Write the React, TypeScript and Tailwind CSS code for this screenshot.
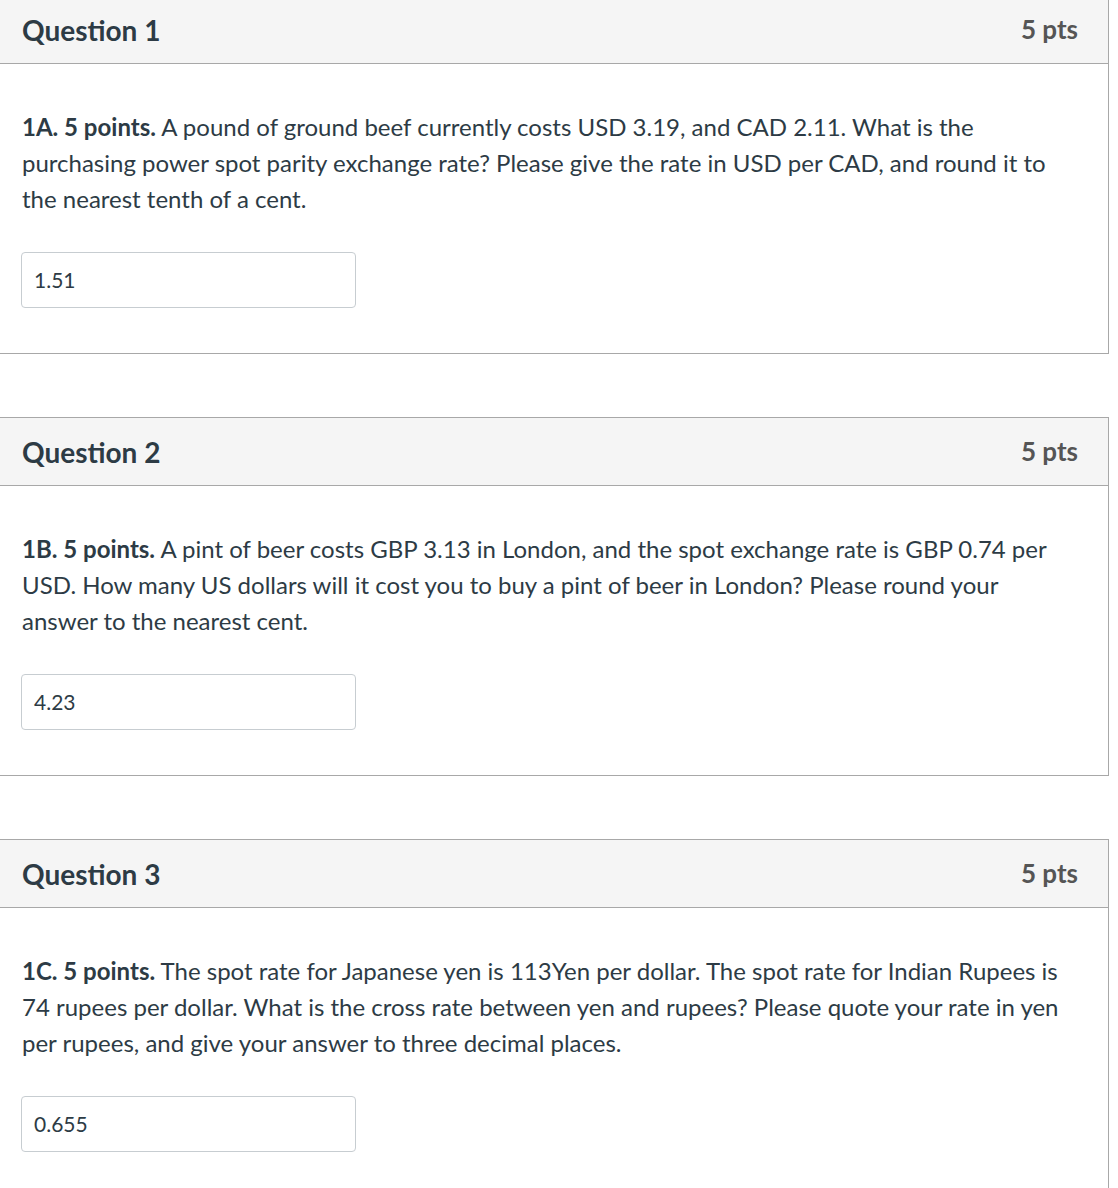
import React from "react";

const questions = [
  {
    title: "Question 1",
    label: "1A. 5 points.",
    text: " A pound of ground beef currently costs USD 3.19, and CAD 2.11. What is the purchasing power spot parity exchange rate? Please give the rate in USD per CAD, and round it to the nearest tenth of a cent.",
    answer: "1.51",
  },
  {
    title: "Question 2",
    label: "1B. 5 points.",
    text: " A pint of beer costs GBP 3.13 in London, and the spot exchange rate is GBP 0.74 per USD. How many US dollars will it cost you to buy a pint of beer in London? Please round your answer to the nearest cent.",
    answer: "4.23",
  },
  {
    title: "Question 3",
    label: "1C. 5 points.",
    text: " The spot rate for Japanese yen is 113Yen per dollar. The spot rate for Indian Rupees is 74 rupees per dollar. What is the cross rate between yen and rupees? Please quote your rate in yen per rupees, and give your answer to three decimal places.",
    answer: "0.655",
  },
];

export default function App() {
  return (
    <div
      className="w-[1118px] h-[1188px] overflow-hidden bg-white"
      style={{ fontFamily: "Lato, 'Open Sans', sans-serif" }}
    >
      <div className="-mt-[5px] -ml-px flex flex-col gap-[63px]">
        {questions.map((q) => (
          <div key={q.title} className="w-[1110px] border border-[#a8a8a8] bg-white">
            <div className="h-[68px] bg-[#f5f5f5] border-b border-[#a8a8a8] flex items-center justify-between pl-[22px] pr-[30px]">
              <div className="text-[28px] font-bold text-[#2d3b45]">{q.title}</div>
              <div className="text-[26px] font-bold text-[#555555]">5 pts</div>
            </div>
            <div className="pl-[22px] pr-[40px] pt-[45px] pb-[45px]">
              <p className="text-[24px] leading-[36px] text-[#2d3b45]">
                <strong className="font-bold">{q.label}</strong>
                {q.text}
              </p>
              <div className="mt-[35px] -ml-px w-[335px] h-[56px] border border-[#c7cdd1] rounded-[4px] flex items-center pl-[12px] text-[21px] text-[#2d3b45]">
                {q.answer}
              </div>
            </div>
          </div>
        ))}
      </div>
    </div>
  );
}
